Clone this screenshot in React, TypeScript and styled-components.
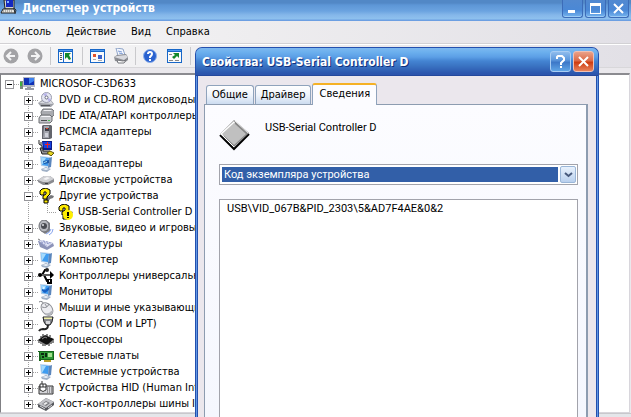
import React from "react";
import styled, { createGlobalStyle, css } from "styled-components";

const uiFont = '"DejaVu Sans Condensed", "DejaVu Sans", sans-serif';
const dialogFont = 'Roboto, "Liberation Sans", sans-serif';

const GlobalStyle = createGlobalStyle`
  *, *::before, *::after { box-sizing: border-box; }
  body { margin: 0; overflow: hidden; }
  button, select { font: inherit; color: inherit; margin: 0; }
  ul { list-style: none; margin: 0; padding: 0; }
`;

const Desktop = styled.div`
  position: relative;
  height: 100vh;
  overflow: hidden;
  font: 11px/16px ${uiFont};
  color: #000;
`;

/* ---------- main window ---------- */

const MainWindow = styled.main`
  display: flex;
  flex-direction: column;
  height: 100%;
  background: #eae8ec;
`;

const MainTitleBar = styled.header`
  display: flex;
  align-items: flex-start;
  justify-content: space-between;
  height: 21px;
  flex: none;
  padding-right: 2px;
  background: linear-gradient(#5288c6 0 3px, #5d96d6 5px, #6ba3e0 11px, #85b7ea 15px, #8ec1ee 19px, #6c9fe2 20px);
`;

const MainTitle = styled.h1`
  display: flex;
  align-items: flex-start;
  gap: 5px;
  margin: 0;
  font: bold 12px/16px ${uiFont};
  color: #fff;
`;

const Controls = styled.div<{ $gap: number }>`
  display: flex;
  gap: ${(p) => p.$gap}px;
`;

const tones = {
  plain: { edge: "#3c6cb8", fill: "linear-gradient(#5289d0, #4a88d6 60%, #75b4ee)" },
  help: { edge: "#a9cdf3", fill: "linear-gradient(#8fbcec, #5f9ade 40%, #3d78c8 55%, #5fa5e6)" },
  close: { edge: "#f0c0b4", fill: "linear-gradient(#e9a189, #dc6a48 45%, #cf3d12 55%, #e8835c)" },
};

const CaptionButton = styled.button<{ $tone: keyof typeof tones; $cut?: boolean }>`
  display: flex;
  align-items: center;
  justify-content: center;
  width: 21px;
  height: ${(p) => (p.$cut ? 18 : 21)}px;
  padding: 0;
  border: 1px solid ${(p) => tones[p.$tone].edge};
  border-top-width: ${(p) => (p.$cut ? 0 : 1)}px;
  border-radius: ${(p) => (p.$cut ? "0 0 3px 3px" : "3px")};
  background: ${(p) => tones[p.$tone].fill};
  box-shadow: inset 0 -1px 0 ${(p) => (p.$cut ? "#9ccbf5" : "transparent")};
`;

const MenuBar = styled.nav`
  display: flex;
  align-items: center;
  gap: 15px;
  height: 23px;
  flex: none;
  padding: 0 8px;
  border-bottom: 1px solid #d2d1d4;
  background: linear-gradient(90deg, #f6f6f7, #eeedef 40%, #e2e0e6);
`;

const MenuItem = styled.button`
  padding: 0;
  border: 0;
  background: none;
`;

const ToolBar = styled.div`
  display: flex;
  align-items: center;
  height: 24px;
  flex: none;
  padding-left: 3px;
  border-top: 1px solid #fff;
  border-bottom: 1px solid #d8d7da;
  background: linear-gradient(90deg, #f6f6f7, #eeedef 40%, #e2e0e6);
`;

const ToolButton = styled.button<{ $after?: number }>`
  display: flex;
  padding: 0;
  margin-right: ${(p) => p.$after ?? 7}px;
  border: 0;
  background: none;
`;

const Separator = styled.span`
  width: 1px;
  height: 18px;
  margin-right: 7px;
  background: #c9c9cc;
`;

const TreePane = styled.section`
  flex: 1;
  min-height: 0;
  overflow: hidden;
  margin: 5px 1px 0 0;
  padding-top: 1px;
  border: 1px solid #d8d6dc;
  border-top: 2px solid #8b8b90;
  border-left-color: #808084;
  background: #fff;
`;

const StatusBar = styled.footer`
  height: 4px;
  flex: none;
  border-top: 1px solid #c8c8cc;
  background: #e4e6ea;
`;

const dots = "linear-gradient(#a0a0a0 1px, transparent 1px)";

const TreeRow = styled.li<{ $level: 0 | 1 | 2; $last?: boolean }>`
  display: flex;
  align-items: center;
  height: 16px;
  white-space: nowrap;
  padding-left: ${(p) => [4, 23, 46][p.$level]}px;
  ${(p) =>
    p.$level > 0 &&
    css`
      background: ${dots} 27px 0 / 1px 2px ${p.$last ? "no-repeat" : "repeat-y"};
    `}
  ${(p) =>
    p.$level === 2 &&
    css`
      background: ${dots} 27px 0 / 1px 2px repeat-y,
        linear-gradient(#a0a0a0, #a0a0a0) 46px 0 / 1px 1px no-repeat,
        linear-gradient(#a0a0a0, #a0a0a0) 46px 2px / 1px 1px no-repeat,
        linear-gradient(#a0a0a0, #a0a0a0) 46px 4px / 1px 1px no-repeat,
        linear-gradient(#a0a0a0, #a0a0a0) 46px 6px / 1px 1px no-repeat;
    `}
`;

const Toggle = styled.button`
  display: flex;
  width: 9px;
  height: 9px;
  flex: none;
  padding: 0;
  border: 1px solid #97979b;
  background: #fff;
`;

const Connector = styled.span<{ $long?: boolean }>`
  width: ${(p) => (p.$long ? 10 : 5)}px;
  height: 1px;
  flex: none;
  background: linear-gradient(90deg, #a0a0a0 1px, transparent 1px) 0 0 / 2px 1px;
`;

const NodeLabel = styled.span`
  padding-left: 5px;
`;

const Svg = styled.svg`
  display: block;
  flex: none;
`;

/* ---------- properties dialog ---------- */

const Dialog = styled.section`
  position: absolute;
  top: 47px;
  right: 32px;
  bottom: 0;
  left: 195px;
  display: flex;
  flex-direction: column;
  border: solid #2450ae;
  border-width: 1px 1px 0;
  border-radius: 7px 7px 0 0;
  background: #ebe7ed;
  box-shadow: inset 1px 0 0 #6199e4, inset -1px 0 0 #6199e4, inset 2px 0 0 #2450ae, inset -2px 0 0 #2450ae;
  font-family: ${dialogFont};
`;

const DialogTitleBar = styled.header`
  display: flex;
  align-items: center;
  justify-content: space-between;
  height: 28px;
  flex: none;
  padding: 0 4px 0 6px;
  border-radius: 6px 6px 0 0;
  border-bottom: 1px solid #24489c;
  background: linear-gradient(#7db8f0, #6cb0ee 4px, #5c9fe6 9px, #4484d2 13px, #3a73c2 18px, #2c57ae 25px, #2d54ac);
`;

const DialogTitle = styled.h2`
  margin: 0;
  font: bold 12px/16px ${uiFont};
  color: #fff;
  text-shadow: 1px 1px 0 #12307c;
`;

const DialogBody = styled.div`
  display: flex;
  flex: 1;
  flex-direction: column;
  min-height: 0;
  padding: 7px 10px 0 8px;
`;

const TabList = styled.div`
  display: flex;
  align-items: flex-end;
  gap: 1px;
  height: 21px;
  flex: none;
  padding-left: 2px;
`;

const Tab = styled.button<{ $active?: boolean }>`
  height: 19px;
  padding: 0 5px;
  border: 1px solid #8fa3bc;
  border-bottom: 0;
  border-radius: 3px 3px 0 0;
  background: linear-gradient(#fff, #f0f4fb 50%, #ccdcf0);
  font: 11px/18px ${uiFont};
  ${(p) =>
    p.$active &&
    css`
      height: 22px;
      margin-bottom: -1px;
      padding: 0 6px 3px;
      border-top: 2px solid #f5b125;
      background: #fcfcff;
      z-index: 1;
    `}
`;

const TabPanel = styled.div`
  display: flex;
  flex: 1;
  flex-direction: column;
  min-height: 0;
  padding: 15px 8px 0 14px;
  border: solid #8d9cb0;
  border-width: 1px 2px 0 1px;
  background: linear-gradient(#fcfcff, #f5f7fe);
`;

const DeviceHeader = styled.div`
  display: flex;
  align-items: flex-start;
  gap: 14px;
  height: 44px;
  flex: none;
`;

const ComboBox = styled.label`
  display: flex;
  height: 21px;
  flex: none;
  padding: 1px 1px 1px 2px;
  border: 1px solid #a2a3ab;
  background: #fff;
`;

const Select = styled.select`
  appearance: none;
  flex: 1;
  min-width: 0;
  margin: 1px 0;
  padding: 0 2px;
  border: 0;
  border-radius: 0;
  outline: 0;
  background: #325fa8;
  color: #fff;
  font: 11px/15px ${dialogFont};
`;

const ComboArrow = styled.span`
  display: flex;
  align-items: center;
  justify-content: center;
  width: 16px;
  margin-left: 2px;
  border: 1px solid #9ab6d8;
  border-radius: 2px;
  background: linear-gradient(#e8f1fc, #b9d0ee);
`;

const ValueList = styled.ul`
  flex: 1;
  min-height: 0;
  margin-top: 14px;
  padding: 1px 7px;
  border: 1px solid #a2a3ab;
  border-bottom: 0;
  background: #fff;
`;

/* ---------- icons ---------- */

const Icon = ({ size = 16, children }: { size?: number; children: React.ReactNode }) => (
  <Svg width={size} height={size} viewBox={`0 0 ${size} ${size}`} aria-hidden="true">
    {children}
  </Svg>
);

const monitor = (
  <>
    <path d="M2 0 12 1 11 11 3 10z" fill="#b9cfe8" />
    <path d="M3 1 11 2 10 10 4 9z" fill="#3f9cf0" />
    <path d="M3 1 8 2 4 9z" fill="#a4dafc" />
    <path d="M11 2l3-1-1 10-3 1z" fill="#5b86bc" />
    <path d="M3 13l5-2 5 2-4 3-5-1z" fill="#9fb0c6" />
    <path d="M4 13l4-1 3 1-3 1z" fill="#eef4fb" />
  </>
);

const question = (
  <>
    <path d="M9 9l4-2 3 1-1 2-3 1-2 3H7z" fill="#77777a" />
    <path d="M2 6V3l2-2 4-1 4 2v4L9 9v2H5V8l3-2V4H6v3H3z" fill="#ffec00" stroke="#000" strokeLinejoin="round" />
    <path d="M6 12h4v3H6z" fill="#ffec00" stroke="#000" />
  </>
);

const icons = {
  root: (
    <>
      <path d="M1 5h3v8H1z" fill="#7c8a80" />
      <path d="M1 6h2v4H1z" fill="#3fae3f" />
      <path d="M4 1h12v10H4z" fill="#b4b8c4" />
      <path d="M5 2h10v7H5z" fill="#1030b4" />
      <path d="M10 2h5v3l-5 3z" fill="#3e82f0" />
      <path d="M8 11h4v1h3v2H6v-2h2z" fill="#989ca6" />
    </>
  ),
  cd: (
    <>
      <path d="M0 11l4-3h9l3 4-3 3H3z" fill="#9fa1a8" />
      <path d="M1 11l4-2h8l2 3z" fill="#dadce2" />
      <path d="M3 13h9v1H3z" fill="#55575c" />
      <circle cx="8.5" cy="5.5" r="5" fill="#e4e6f2" stroke="#9a9cae" />
      <path d="M8 5 5 2 9 1zM9 6l4 1-2 3z" fill="#b6b2ea" />
      <circle cx="8.5" cy="5.5" r="1.5" fill="#fff" stroke="#6a6c80" />
    </>
  ),
  ide: (
    <>
      <path d="M3 4l2-3h9l2 2v4l-2 2H4z" fill="#a9abb0" stroke="#77797d" />
      <path d="M5 3l1-1h7l1 1z" fill="#eeeef2" />
      <path d="M1 10l2-3h9l2 2v4l-2 2H1z" fill="#c4c6ca" stroke="#6c6e72" />
      <path d="M2 9l2-1h8l1 1z" fill="#f6f6fa" />
      <path d="M3 12h6v1H3z" fill="#4b4d50" />
      <path d="M10 12h2v1h-2z" fill="#4bc14b" />
    </>
  ),
  pcmcia: (
    <>
      <path d="M5 1h8l1 1v12l-2 1H4V2z" fill="#63656c" />
      <path d="M6 2h5v12H5z" fill="#a3a5ad" />
      <path d="M7 4h4v3H7z" fill="#3e4048" />
      <path d="M8 4h2v1H8z" fill="#e2442a" />
      <path d="M7 9h3v4H7z" fill="#d0d2da" />
    </>
  ),
  battery: (
    <>
      <path d="M1 0v4l3 2v3" fill="none" stroke="#222" />
      <path d="M3 2v3" stroke="#222" />
      <path d="M4 1h10v9H5z" fill="#0c1c88" />
      <path d="M5 2h8v6H6z" fill="#1742e0" />
      <path d="M9 2h1v2h2v1h-2v3H9V5H7V4h2z" fill="#f02020" />
      <path d="M2 8h3v3h7l1 2-3 1H4z" fill="#8f9195" stroke="#222" />
      <path d="M9 13l3-2 4 2-3 3z" fill="#e6d422" stroke="#5c5410" />
    </>
  ),
  video: (
    <>
      {monitor}
      <path d="M5 5l6-1v3L6 8z" fill="#1c57a8" />
      <path d="M6 6l3-1v1L6 7z" fill="#a4e4f8" />
    </>
  ),
  disk: (
    <>
      <path d="M0 8l6-4h6l4 3v3l-6 3H5L0 10z" fill="#8a8b90" />
      <path d="M0 8l6-4h6l4 3-6 3H5z" fill="#cfd0d4" />
      <path d="M5 7l4-2 3 1-4 2z" fill="#f4f4f6" />
      <path d="M7 11h3v1H7z" fill="#3d3e42" />
    </>
  ),
  unknown: question,
  warn: (
    <>
      {question}
      <circle cx="11" cy="11" r="5" fill="#ffef00" />
      <path d="M10 8h2v4h-2zM10 13h2v1h-2z" fill="#000" />
    </>
  ),
  sound: (
    <>
      <path d="M3 3l5-3 4 3v8l-5 3-5-4z" fill="#7d7f86" />
      <ellipse cx="6" cy="6" rx="5" ry="6" fill="#b6b8be" stroke="#6c6e74" />
      <circle cx="6" cy="6" r="3" fill="#4a4c52" />
      <circle cx="5" cy="5" r="1" fill="#e0e1e6" />
      <path d="M8 14q4-1 5-5M11 15q4-2 4-6" fill="none" stroke="#86a4ee" strokeWidth="1" />
    </>
  ),
  keyboard: (
    <>
      <path d="M0 5l3-1 12 3 1 3-7 4-7-3z" fill="#8c93b8" />
      <path d="M1 5l3-1 11 3-6 4z" fill="#dfe2f4" />
      <path d="M3 6l9 2M5 5l8 2M3 7l6 3" stroke="#9098c8" strokeDasharray="2 1" />
      <path d="M0 3l2 1" stroke="#777" />
    </>
  ),
  computer: monitor,
  usb: (
    <>
      <path d="M1 7h12M4 7l3-5h2M6 7l3 6h2" fill="none" stroke="#000" strokeWidth="2" />
      <path d="M3 7h9" stroke="#bbb" />
      <circle cx="2" cy="7" r="2" fill="#000" />
      <path d="M12 3l4 4-4 4z" fill="#000" />
      <circle cx="9" cy="2" r="2" fill="#222" />
      <path d="M9 11h5v5H9z" fill="#000" />
      <path d="M11 12h1v2h-1z" fill="#fff" />
    </>
  ),
  display: (
    <>
      {monitor}
      <path d="M4 5l3 1 4-3v3L7 9 4 7z" fill="#1760c4" />
      <path d="M5 3l3 1-3 1z" fill="#e4f6ff" />
    </>
  ),
  mouse: (
    <>
      <path d="M1 2q3-2 6 3" fill="none" stroke="#77797e" />
      <ellipse cx="9" cy="9" rx="7" ry="5" fill="#ececf0" stroke="#8e9096" transform="rotate(50 9 9)" />
      <path d="M4 7q5 2 7-3M7 4l2 3" fill="none" stroke="#8e9096" />
      <path d="M7 14q6 1 7-3" fill="none" stroke="#b6b8be" strokeWidth="2" />
    </>
  ),
  port: (
    <>
      <path d="M5 1h10l-1 5-2 3H8L6 6z" fill="#85878c" stroke="#222" />
      <path d="M6 1h8v2H6z" fill="#f0f0a8" />
      <path d="M7 1v1M9 1v1M11 1v1M13 1v1" stroke="#555" />
      <path d="M8 5h4v3H8z" fill="#d6d7da" />
      <path d="M10 9q0 5-5 4-3 0-4 2" fill="none" stroke="#222" strokeWidth="2" />
    </>
  ),
  cpu: (
    <>
      <path d="M0 8l7-5 9 4-7 6z" fill="#111" />
      <path d="M1 8v3M3 9v3M5 10v4M7 11v3M11 10v4M13 9v3M15 7v4M3 6V4M5 5V2M9 4V2M12 5V3" stroke="#111" />
      <path d="M4 7l3-2 2 1" fill="none" stroke="#888" />
    </>
  ),
  net: (
    <>
      <path d="M0 3h16v9H3v1H1V4H0z" fill="#17641c" />
      <path d="M2 4h13v7H3z" fill="#2f9a36" />
      <path d="M3 5h3v2H3zM7 5h2v4H7zM4 8h2v2H4z" fill="#0b2c10" />
      <path d="M10 5h4v4h-4z" fill="#a2e08e" />
      <path d="M6 12h7v2H6z" fill="#b8a02a" />
    </>
  ),
  system: monitor,
  hid: (
    <>
      <path d="M1 6h14v8H1z" fill="#d4d4d8" stroke="#333" />
      <path d="M9 8h5M9 10h5M9 12h5" stroke="#555" strokeDasharray="1 1" />
      <path d="M4 1v3" stroke="#333" />
      <path d="M2 4h6v6q-3 3-6 0z" fill="#fff" stroke="#333" />
      <path d="M5 4v3M2 7h6" stroke="#333" />
    </>
  ),
  host: (
    <>
      <path d="M0 8l8-6 8 4v3l-8 6-8-4z" fill="#55575c" />
      <path d="M0 8l8-6 8 4-8 6z" fill="#c2c3c8" />
      <path d="M4 8l4-3 4 2-4 3z" fill="#77797e" />
      <path d="M5 8l3-2 2 1-3 2z" fill="#f0f0f2" />
      <path d="M2 10l5 3M10 12l4-3" stroke="#d8d8dc" />
    </>
  ),
};

const NavArrow = ({ back }: { back?: boolean }) => (
  <Icon>
    <circle cx="8" cy="8" r="7.5" fill="#a3a3a6" />
    <path d={back ? "M12 8H5M8 4L4 8l4 4" : "M4 8h7M8 4l4 4-4 4"} fill="none" stroke="#f4f4f5" strokeWidth="2" />
  </Icon>
);

const WindowFrame = ({ children }: { children: React.ReactNode }) => (
  <Icon>
    <path d="M0 1h15v14H0z" fill="#1767c8" />
    <path d="M1 4h13v10H1z" fill="#fbfbfb" />
    <path d="M1 2h13v1H1z" fill="#4f9af0" />
    {children}
  </Icon>
);

const TitleIcon = () => (
  <Svg width="17" height="16" viewBox="0 0 17 16" aria-hidden="true">
    <path d="M4 0h10v9H5z" fill="#d4d4d0" stroke="#222" />
    <path d="M6 0h7v7H6z" fill="#1428c0" />
    <path d="M7 1h2v2H7z" fill="#7fb4ff" />
    <path d="M3 9h11l1 4H1z" fill="#e6e6e2" stroke="#222" />
    <path d="M3 10h9M3 12h9" stroke="#777" strokeDasharray="1 1" />
    <path d="M14 8l2 2-1 4" fill="none" stroke="#333" />
  </Svg>
);

const DeviceIcon = () => (
  <Svg width="32" height="32" viewBox="0 0 32 32" aria-hidden="true">
    <path d="M1 15 15 29 30 14" fill="none" stroke="#000" strokeWidth="2" />
    <path d="M15 0 30 13 15 27 1 14z" fill="#868686" />
    <path d="M15 1 1 14 4 16 16 3z" fill="#fff" />
    <path d="M15 3 27 14 15 25 3 14z" fill="#c0c0c0" />
    <path d="M2 14 15 27" stroke="#fff" />
    <path d="M16 1 29 13" stroke="#e6e6e6" />
  </Svg>
);

const CloseGlyph = () => (
  <Svg width="13" height="13" viewBox="0 0 13 13" aria-hidden="true">
    <path d="M2 2l9 9M11 2l-9 9" stroke="#fff" strokeWidth="2" />
  </Svg>
);

type IconName = keyof typeof icons;

const devices: { icon: IconName; label: string; child?: { icon: IconName; label: string } }[] = [
  { icon: "cd", label: "DVD и CD-ROM дисководы" },
  { icon: "ide", label: "IDE ATA/ATAPI контроллеры" },
  { icon: "pcmcia", label: "PCMCIA адаптеры" },
  { icon: "battery", label: "Батареи" },
  { icon: "video", label: "Видеоадаптеры" },
  { icon: "disk", label: "Дисковые устройства" },
  { icon: "unknown", label: "Другие устройства", child: { icon: "warn", label: "USB-Serial Controller D" } },
  { icon: "sound", label: "Звуковые, видео и игровые устройства" },
  { icon: "keyboard", label: "Клавиатуры" },
  { icon: "computer", label: "Компьютер" },
  { icon: "usb", label: "Контроллеры универсальной шины" },
  { icon: "display", label: "Мониторы" },
  { icon: "mouse", label: "Мыши и иные указывающие" },
  { icon: "port", label: "Порты (COM и LPT)" },
  { icon: "cpu", label: "Процессоры" },
  { icon: "net", label: "Сетевые платы" },
  { icon: "system", label: "Системные устройства" },
  { icon: "hid", label: "Устройства HID (Human Interface)" },
  { icon: "host", label: "Хост-контроллеры шины IEEE" },
];

const Expander = ({ open, label }: { open?: boolean; label: string }) => (
  <Toggle aria-expanded={!!open} aria-label={label}>
    <Svg width="7" height="7" viewBox="0 0 7 7" aria-hidden="true">
      <path d={open ? "M1 3h5v1H1z" : "M1 3h5v1H1zM3 1h1v5H3z"} fill="#000" />
    </Svg>
  </Toggle>
);

const menu = ["Консоль", "Действие", "Вид", "Справка"];

export default function App() {
  return (
    <Desktop>
      <GlobalStyle />
      <MainWindow>
        <MainTitleBar>
          <MainTitle>
            <TitleIcon />
            Диспетчер устройств
          </MainTitle>
          <Controls $gap={2}>
            <CaptionButton $tone="plain" $cut aria-label="Свернуть">
              <Svg width="13" height="13" viewBox="0 0 13 13">
                <path d="M2 8h7v3H2z" fill="#fff" />
              </Svg>
            </CaptionButton>
            <CaptionButton $tone="plain" $cut aria-label="Развернуть">
              <Svg width="13" height="13" viewBox="0 0 13 13">
                <path d="M1 1h11v11H1zM2 4v7h9V4z" fill="#fff" fillRule="evenodd" />
              </Svg>
            </CaptionButton>
            <CaptionButton $tone="plain" $cut aria-label="Закрыть">
              <CloseGlyph />
            </CaptionButton>
          </Controls>
        </MainTitleBar>
        <MenuBar>
          {menu.map((m) => (
            <MenuItem key={m}>{m}</MenuItem>
          ))}
        </MenuBar>
        <ToolBar>
          <ToolButton aria-label="Назад" $after={8}>
            <NavArrow back />
          </ToolButton>
          <ToolButton aria-label="Вперед">
            <NavArrow />
          </ToolButton>
          <Separator />
          <ToolButton aria-label="Дерево консоли" $after={8}>
            <WindowFrame>
              <path d="M2 5h2v1H2zM2 7h2v1H2zM2 9h2v1H2zM2 11h2v1H2z" fill="#555" />
              <path d="M5 4h1v10H5z" fill="#1767c8" />
              <path d="M7 5h6l-2 2 2 4-2 1-2-3-2 2z" fill="#12882c" />
            </WindowFrame>
          </ToolButton>
          <Separator />
          <ToolButton aria-label="Свойства">
            <WindowFrame>
              <path d="M3 6h3v3H3z" fill="#e2522c" />
              <path d="M8 7h4v4H8z" fill="#3c62c8" />
              <path d="M3 11h3v1H3zM8 12h4v1H8z" fill="#aaa" />
            </WindowFrame>
          </ToolButton>
          <ToolButton aria-label="Печать" $after={6}>
            <Icon>
              <path d="M3 0l7 1 2 6-7 1z" fill="#f3f7ff" stroke="#8fa4c8" />
              <path d="M5 3l4 1M6 5l4 1" stroke="#7c9ad4" />
              <path d="M1 9l3-2 9-1 2 3v3l-4 3-9-2z" fill="#8c8e94" />
              <path d="M1 9l3-1 9-1 2 2-4 3z" fill="#d8d9de" />
              <path d="M4 12l6 1 3-1-2 3H5z" fill="#fff" stroke="#75777c" />
            </Icon>
          </ToolButton>
          <Separator />
          <ToolButton aria-label="Справка" $after={8}>
            <Icon>
              <circle cx="7" cy="8" r="6.5" fill="#2a62d0" stroke="#8eb0ea" />
              <path d="M5 6q0-2 2-2t2 2q0 1-2 3v1M7 11v2" fill="none" stroke="#fff" strokeWidth="2" />
            </Icon>
          </ToolButton>
          <ToolButton aria-label="Обновить">
            <WindowFrame>
              <path d="M6 5h6v5l-2-2-3 3-2-2 3-2z" fill="#12882c" />
              <path d="M2 6h3v1H2zM2 12h4v1H2zM8 12h4v1H8z" fill="#888" />
            </WindowFrame>
          </ToolButton>
          <Separator />
        </ToolBar>
        <TreePane>
          <ul>
            <TreeRow $level={0}>
              <Expander open label="MICROSOF-C3D633" />
              <Connector />
              <Icon>{icons.root}</Icon>
              <NodeLabel>MICROSOF-C3D633</NodeLabel>
            </TreeRow>
            {devices.map((d, i) => (
              <React.Fragment key={d.label}>
                <TreeRow $level={1} $last={i === devices.length - 1}>
                  <Expander open={!!d.child} label={d.label} />
                  <Connector />
                  <Icon>{icons[d.icon]}</Icon>
                  <NodeLabel>{d.label}</NodeLabel>
                </TreeRow>
                {d.child && (
                  <TreeRow $level={2}>
                    <Connector $long />
                    <Icon>{icons[d.child.icon]}</Icon>
                    <NodeLabel>{d.child.label}</NodeLabel>
                  </TreeRow>
                )}
              </React.Fragment>
            ))}
          </ul>
        </TreePane>
        <StatusBar />
      </MainWindow>

      <Dialog role="dialog" aria-labelledby="dialog-title">
        <DialogTitleBar>
          <DialogTitle id="dialog-title">Свойства: USB-Serial Controller D</DialogTitle>
          <Controls $gap={2}>
            <CaptionButton $tone="help" aria-label="Справка">
              <Svg width="13" height="15" viewBox="0 0 13 15">
                <path d="M3 5V3l1-1h4l2 2v2L7 9v2M7 12v2" fill="none" stroke="#fff" strokeWidth="2" />
              </Svg>
            </CaptionButton>
            <CaptionButton $tone="close" aria-label="Закрыть">
              <CloseGlyph />
            </CaptionButton>
          </Controls>
        </DialogTitleBar>
        <DialogBody>
          <TabList role="tablist">
            <Tab role="tab">Общие</Tab>
            <Tab role="tab">Драйвер</Tab>
            <Tab role="tab" aria-selected="true" $active>
              Сведения
            </Tab>
          </TabList>
          <TabPanel role="tabpanel">
            <DeviceHeader>
              <DeviceIcon />
              <span>USB-Serial Controller D</span>
            </DeviceHeader>
            <ComboBox>
              <Select aria-label="Свойство устройства">
                <option>Код экземпляра устройства</option>
              </Select>
              <ComboArrow>
                <Svg width="9" height="6" viewBox="0 0 9 6" aria-hidden="true">
                  <path d="M1 1l3.5 3L8 1" fill="none" stroke="#47597c" strokeWidth="2" />
                </Svg>
              </ComboArrow>
            </ComboBox>
            <ValueList>
              <li>USB\VID_067B&amp;PID_2303\5&amp;AD7F4AE&amp;0&amp;2</li>
            </ValueList>
          </TabPanel>
        </DialogBody>
      </Dialog>
    </Desktop>
  );
}
